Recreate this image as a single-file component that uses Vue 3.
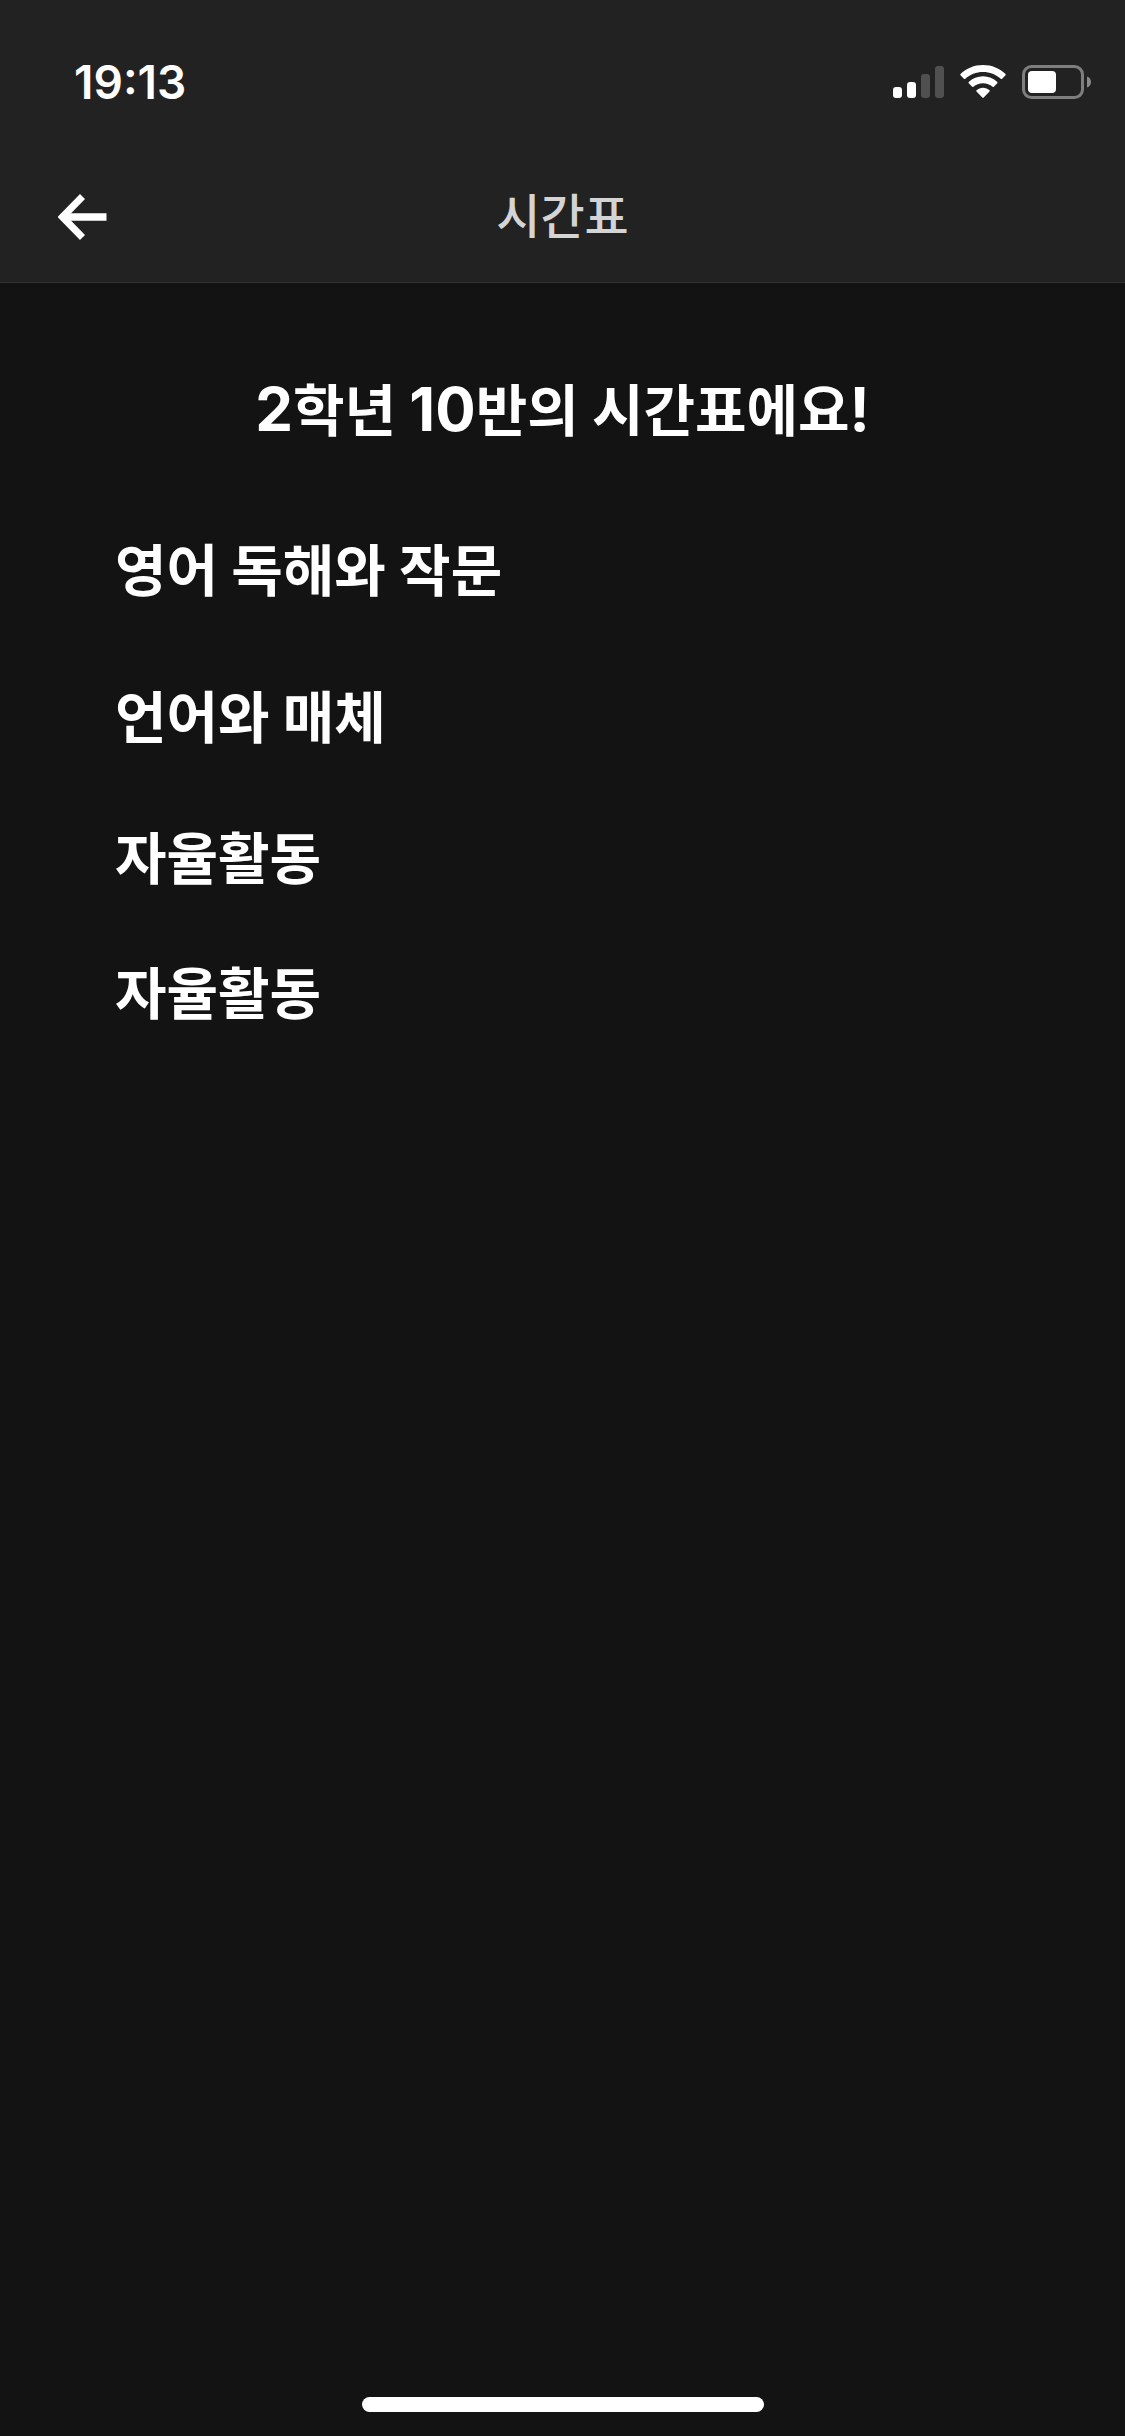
<script setup>
const headingParts = [
  { text: '2', latin: true },
  { text: '학년 ', latin: false },
  { text: '10', latin: true },
  { text: '반의 시간표에요', latin: false },
  { text: '!', latin: true },
]
const lessons = ['영어 독해와 작문', '언어와 매체', '자율활동', '자율활동']
</script>

<template>
  <div class="screen">
    <header class="top">
      <div class="status">
        <time class="clock">19:13</time>
        <div class="indicators">
          <svg class="signal" width="51" height="34" viewBox="0 0 51 34" aria-hidden="true">
            <rect x="0" y="22" width="9" height="11" rx="3" fill="#fff" />
            <rect x="14" y="17" width="9" height="16" rx="3" fill="#fff" />
            <rect x="28" y="9" width="9" height="24" rx="3" fill="#505050" />
            <rect x="42" y="1" width="9" height="32" rx="3" fill="#505050" />
          </svg>
          <svg class="wifi" width="46" height="34" viewBox="0 0 46 34" fill="#fff" aria-hidden="true">
            <path d="M23 0C14.200 0 6.200 3.400 0.500 9Q0 9.700 0.500 10.300L3.900 13.700Q4.600 14.200 5.300 13.700C10 9.300 16.200 6.900 23 6.900S36 9.300 40.700 13.700Q41.400 14.200 42.100 13.700L45.500 10.300Q46 9.700 45.500 9C39.800 3.400 31.800 0 23 0Z" />
            <path d="M23 11.300C17.600 11.300 12.500 13.400 8.700 17Q8.200 17.600 8.700 18.200L12.200 21.700Q12.800 22.200 13.400 21.700C16 19.400 19.300 18.200 23 18.200S30 19.400 32.600 21.700Q33.200 22.200 33.800 21.700L37.300 18.200Q37.800 17.600 37.300 17C33.500 13.400 28.400 11.300 23 11.300Z" />
            <path d="M23 22.800C20.600 22.800 18.300 23.700 16.500 25.200Q15.900 25.900 16.500 26.500L22.300 32.600Q23 33.300 23.700 32.600L29.500 26.500Q30.100 25.900 29.500 25.200C27.700 23.700 25.400 22.800 23 22.800Z" />
          </svg>
          <svg class="battery" width="70" height="34" viewBox="0 0 70 34" aria-hidden="true">
            <rect x="1.500" y="1.500" width="59" height="31" rx="8" fill="none" stroke="#7e7e7e" stroke-width="3" />
            <rect x="6" y="6" width="28" height="22" rx="4" fill="#fff" />
            <path d="M65 11.500C67.500 12.300 69 14.500 69 17S67.500 21.700 65 22.500Z" fill="#8a8a8a" />
          </svg>
        </div>
      </div>
      <nav class="bar">
        <button class="back" type="button" aria-label="뒤로">
          <svg width="50" height="46" viewBox="0 0 50 46" fill="none" stroke="#fff" aria-hidden="true">
            <path d="M24.500 2.500L4.500 23L24.500 43.500" stroke-width="7" />
            <path d="M5 23H48.500" stroke-width="7.500" />
          </svg>
        </button>
        <h1 class="title">시간표</h1>
      </nav>
    </header>

    <main class="content">
      <h2 class="heading"><span
        v-for="part in headingParts"
        :key="part.text"
        :class="{ latin: part.latin }"
      >{{ part.text }}</span></h2>
      <ul class="lessons">
        <li
          v-for="(lesson, index) in lessons"
          :key="index"
          class="lesson"
          :class="{ spaced: lesson.includes(' ') }"
        >
          {{ lesson }}
        </li>
      </ul>
    </main>

    <footer class="home"><span class="home-bar"></span></footer>
  </div>
</template>

<style>
body {
  background: #131313;
}
</style>

<style scoped>
.screen {
  display: flex;
  flex-direction: column;
  min-height: 100vh;
  background: #131313;
  color: #fff;
  font-family: Inter, "Noto Sans CJK KR", sans-serif;
}

.top {
  background: #222;
  border-bottom: 1px solid #333;
}

.status {
  display: flex;
  align-items: center;
  justify-content: space-between;
  padding: 56px 33px 44px 74px;
}

.clock {
  font-size: 46px;
  font-weight: 600;
  line-height: 52px;
}

.indicators {
  display: flex;
  gap: 16px;
}

.bar {
  display: grid;
  grid-template-columns: 112px 1fr 112px;
  align-items: center;
  height: 130px;
}

.back {
  display: flex;
  justify-content: flex-end;
  padding: 0 4px 0 0;
  border: 0;
  background: none;
  cursor: pointer;
}

.title {
  margin: 0;
  color: #d4d4d4;
  font-size: 48px;
  font-weight: 500;
  line-height: 72px;
  text-align: center;
}

.content {
  flex: 1;
  padding-top: 89px;
}

.heading {
  margin: 0 0 48px;
  font-size: 56px;
  font-weight: 700;
  line-height: 78px;
  text-align: center;
  white-space: pre-wrap;
}

.latin {
  font-size: 60px;
  line-height: 1;
}

.lessons {
  margin: 0;
  padding: 0 115px;
  list-style: none;
}

.lesson {
  font-size: 56px;
  font-weight: 700;
  line-height: 135px;
}

.lesson.spaced {
  line-height: 147px;
}

.home {
  display: flex;
  justify-content: center;
  padding-bottom: 24px;
}

.home-bar {
  width: 402px;
  height: 15px;
  border-radius: 8px;
  background: #fff;
}
</style>
